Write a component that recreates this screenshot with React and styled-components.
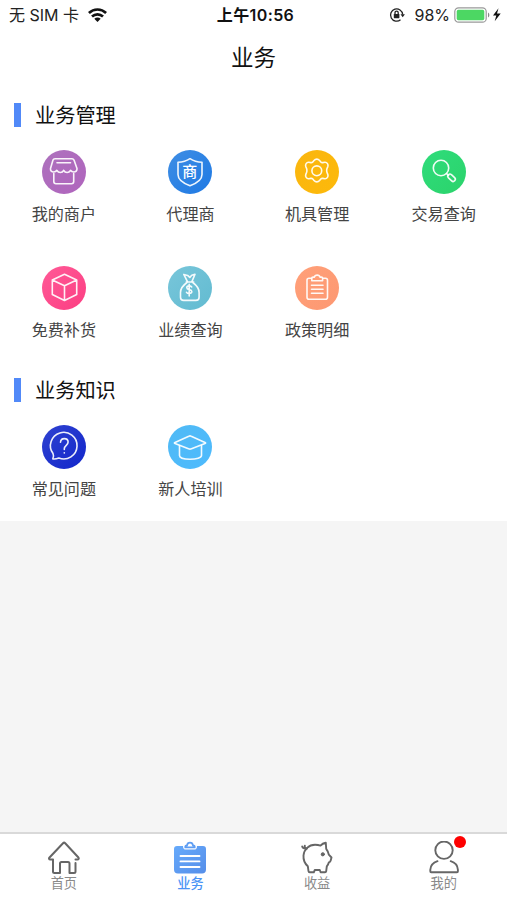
import React from "react";
import styled, { createGlobalStyle } from "styled-components";

const GlobalStyle = createGlobalStyle`
    * {
        box-sizing: border-box;
    }

    body {
        margin: 0;
        background: #f5f5f5;
        font-family: "Inter", "Noto Sans CJK SC", sans-serif;
    }
`;

const Page = styled.div`
    display: flex;
    flex-direction: column;
    height: 100vh;
    overflow: hidden;
`;

const Content = styled.main`
    height: 521px;
    background: #fff;
`;

const StatusBar = styled.div`
    display: grid;
    grid-template-columns: 1fr auto 1fr;
    align-items: center;
    height: 30px;
    padding: 0 5px 0 9px;
    color: #222;
    font-size: 16px;
    line-height: 30px;
    white-space: nowrap;
`;

const Carrier = styled.div`
    display: flex;
    align-items: center;
    gap: 9px;
`;

const Time = styled.div`
    color: #111;
    font-weight: 600;
    font-size: 16px;
    letter-spacing: 0.4px;
`;

const Power = styled.div`
    display: flex;
    align-items: center;
    justify-content: flex-end;
`;

const Percent = styled.span`
    margin: 0 4px 0 9px;
`;

const NavBar = styled.h1`
    margin: 0;
    height: 54px;
    color: #111;
    font-size: 22.5px;
    font-weight: 400;
    line-height: 56px;
    text-align: center;
`;

const Section = styled.section`
    padding-top: ${(props) => props.$top}px;
`;

const SectionTitle = styled.h2`
    display: flex;
    align-items: center;
    gap: 14px;
    height: 24px;
    margin: 0 0 23px 14px;
    color: #111;
    font-size: 20.2px;
    font-weight: 400;

    &::before {
        content: "";
        width: 7px;
        height: 24px;
        background: #5189f8;
    }

    span {
        padding-top: 2px;
        line-height: 24px;
    }
`;

const Grid = styled.div`
    display: grid;
    grid-template-columns: repeat(4, 1fr);
    row-gap: 36px;
    padding-left: 0.5px;
`;

const Item = styled.div`
    display: flex;
    flex-direction: column;
    align-items: center;
    height: 80px;
`;

const Circle = styled.div`
    width: 44px;
    height: 44px;
    border-radius: 50%;
    background: linear-gradient(135deg, ${(props) => props.$from}, ${(props) => props.$to});

    svg {
        display: block;
    }
`;

const Label = styled.div`
    margin-top: 8px;
    color: #444;
    font-size: 16.1px;
    line-height: 24px;
`;

const TabBar = styled.nav`
    display: grid;
    grid-template-columns: repeat(4, 1fr);
    height: 68px;
    margin-top: auto;
    padding-left: 0.5px;
    border-top: 2px solid #d9d9d9;
    background: #fff;
`;

const Tab = styled.div`
    display: flex;
    flex-direction: column;
    align-items: center;
    padding-top: 7px;
    color: ${(props) => (props.$active ? "#4a94f5" : "#8a8a8a")};
    font-size: 13.2px;
    font-weight: ${(props) => (props.$active ? 500 : 400)};
    line-height: 18px;
`;

const TabIcon = styled.div`
    position: relative;
    height: 33px;

    svg {
        display: block;
    }
`;

const Dot = styled.span`
    position: absolute;
    top: -5px;
    right: -6px;
    width: 12px;
    height: 12px;
    border-radius: 50%;
    background: #fe0000;
`;

const Icon = ({ children }) => (
    <svg
        width="44"
        height="44"
        viewBox="0 0 44 44"
        fill="none"
        stroke="#fff"
        strokeOpacity="0.92"
        strokeWidth="1.6"
        strokeLinecap="round"
        strokeLinejoin="round"
    >
        {children}
    </svg>
);

const ShopIcon = () => (
    <Icon>
        <path d="M13 8.700h17c1 0 1.600.5 2 1.400l3 8.400c.2 2.200-1.300 3.500-3.200 3.500-1.600 0-2.600-.6-3.300-1.700-.7 1.200-1.800 2.200-3.400 2.200s-2.800-1-3.400-2.200c-.6 1.200-1.800 2.200-3.400 2.200s-2.700-1-3.400-2.200c-.7 1.100-1.700 1.700-3.200 1.700-2 0-3.500-1.300-3.200-3.500l2.500-8.400c.3-.9 1-1.400 2-1.400z" />
        <path d="M15 12.700h13.500" />
        <path d="M11.800 23.500v8c0 1.400.8 2.200 2.200 2.200h15.500c1.400 0 2.200-.8 2.200-2.200v-8" />
    </Icon>
);

const AgentIcon = () => (
    <Icon>
        <path d="M22 8.700c3.500 2.400 7.500 3.500 12 3.500v12.300c0 5-4.500 8.500-12 11.300-7.500-2.800-12-6.300-12-11.300V12.200c4.500 0 8.500-1.100 12-3.500z" />
        <text
            x="21.700"
            y="27.300"
            fill="#fff"
            stroke="none"
            fontSize="15"
            fontWeight="500"
            textAnchor="middle"
            fontFamily="Noto Sans CJK SC, sans-serif"
        >
            商
        </text>
    </Icon>
);

const GearIcon = () => (
    <Icon>
        <path d="M19 10.500c1.600-1.800 4-1.800 5.600 0l1.200 1.400c.5.600 1.200.8 2 .7l2-.3c2.300-.2 3.800 2.200 3 4.300l-.8 1.900c-.3.700-.3 1.300-.3 2s0 1.300.3 2l.8 1.900c.8 2.100-.7 4.500-3 4.300l-2-.3c-.8-.1-1.500.1-2 .7l-1.200 1.400c-1.600 1.800-4 1.800-5.600 0l-1.200-1.400c-.5-.6-1.200-.8-2-.7l-2 .3c-2.300.2-3.800-2.200-3-4.300l.8-1.900c.3-.7.3-1.300.3-2s0-1.300-.3-2l-.8-1.900c-.8-2.100.7-4.500 3-4.300l2 .3c.8.1 1.500-.1 2-.7z" />
        <circle cx="21.800" cy="20.800" r="4.900" />
    </Icon>
);

const SearchIcon = () => (
    <Icon>
        <circle cx="19" cy="18" r="7.700" />
        <path d="M24.500 23.500l2 2" />
        <rect x="25.200" y="25.600" width="8.600" height="4.300" rx="2.100" transform="rotate(43 29.500 27.800)" />
    </Icon>
);

const BoxIcon = () => (
    <Icon>
        <path d="M22.500 8.300l12.200 5.700v14.500l-12.200 6-12.200-6V14zM10.300 14l12.200 5.800L34.700 14M22.500 19.800v14.700" />
    </Icon>
);

const MoneyIcon = () => (
    <Icon>
        <path d="M19.300 15.400l-3.500-7 3.800 1 2.200 2 2-2.200 3.200-1-3 7.200" />
        <path d="M18.300 16h7.400M19 16.500c-4.200 3-6.500 5.500-6.500 10v4.700c0 2.200 1 3.200 3.200 3.200h12.200c2.200 0 3.200-1 3.200-3.200v-4.700c0-4.500-2.300-7-6.300-10" />
        <path d="M23.700 20.900c-.6-.7-1.400-1-2.600-1-1.400 0-2.300.7-2.300 1.800 0 2.600 5 1.200 5 3.900 0 1.200-1 1.900-2.600 1.900-1.200 0-2.200-.4-2.700-1.200M21.200 18.300v11.700" />
    </Icon>
);

const PolicyIcon = () => (
    <Icon>
        <path d="M16.500 12.300H14c-1.200 0-2 .8-2 2v17c0 1.200.8 2 2 2h16.500c1.200 0 2-.8 2-2v-17c0-1.200-.8-2-2-2H28" />
        <path d="M16.800 14.800v-2.500c0-.8.500-1.200 1.200-1.200h1.400c.3-1.300 1.200-2 2.800-2s2.500.7 2.800 2h1.400c.7 0 1.200.4 1.200 1.200v2.500z" />
        <path d="M16.500 19.300h11.500M16.500 23.300h11.500M16.500 27.300h11.500" />
    </Icon>
);

const QuestionIcon = () => (
    <Icon>
        <path d="M11 28.500A13.300 13.300 0 1 1 16.800 33c-2 .8-4 1.200-6 .9 1-1.700 1-3.600.2-5.400z" />
        <path d="M18.500 17.200c.2-2.200 1.600-3.600 3.800-3.600s3.800 1.400 3.800 3.500c0 3.200-3.800 3.200-3.800 6.700v.7M22.300 27.800v.2" />
    </Icon>
);

const TrainingIcon = () => (
    <Icon>
        <path d="M20.800 11.200c.8-.4 1.600-.4 2.400 0L37 17.400c.8.400.8.900 0 1.200l-13.500 5.200c-1 .4-2 .4-3 0L7 18.600c-.8-.3-.8-.8 0-1.200z" />
        <path d="M11.500 20.600v10c0 2 4 3.700 10.500 3.700s11.500-1.700 11.500-3.700v-10" />
    </Icon>
);

const HomeIcon = () => (
    <svg width="32" height="34" viewBox="0 0 32 34" fill="none" stroke="#666" strokeWidth="2" strokeLinecap="round" strokeLinejoin="round">
        <path d="M27.500 22v8.500c0 1-.6 1.500-1.500 1.500h-4.500V22.500c0-1-.6-1.500-1.500-1.500h-6.500c-1 0-1.500.5-1.500 1.500V32H6.500c-1 0-1.500-.5-1.500-1.500V18.500H2.300c-1.300 0-1.700-1-.8-2L15 2.200c.7-.7 1.500-.7 2.200 0l13 14c1 1.200.5 2.300-.9 2.300h-1.800" />
    </svg>
);

const BusinessIcon = () => (
    <svg width="34" height="34" viewBox="0 0 34 34" fill="none">
        <defs>
            <linearGradient id="clip" x1="1" y1="1" x2="0" y2="0">
                <stop offset="0" stopColor="#568ee9" />
                <stop offset="1" stopColor="#66aafb" />
            </linearGradient>
        </defs>
        <path d="M4 5h6c0 2.600 1 3.600 3 3.600h8c2 0 3-1 3-3.600h6c2 0 3 1 3 3v20.500c0 2.600-1.400 4-4 4H5c-2.600 0-4-1.400-4-4V8c0-2 1-3 3-3z" fill="url(#clip)" />
        <path d="M12.300 6.400c-.2-1.500.5-2.100 1.700-2.100.3-1.700 1.300-2.700 3-2.700s2.700 1 3 2.700c1.200 0 1.900.6 1.700 2.100z" stroke="#5e9df3" strokeWidth="1.800" />
        <path d="M7.500 15h19M7.500 20.400h19M7.500 26h19" stroke="#fff" strokeWidth="1.900" strokeLinecap="round" />
    </svg>
);

const PigIcon = () => (
    <svg width="32" height="34" viewBox="0 0 32 34" fill="none" stroke="#666" strokeWidth="1.900" strokeLinecap="round" strokeLinejoin="round">
        <path d="M19.500 4.600c-1.500-.6-3.500-.9-5.500-.9C7.700 3.700 3 8.500 2.500 14.500c-.3 4.300 1.300 8 4.300 10.700l.7 5c.1.800.5 1.100 1.200 1.100h4.100l1-2.300h5l.8 2.300H24c.7 0 1.100-.4 1.200-1.100l.6-4.800c.9-1.200 1.600-2.400 2-4 .9-.2 1.500-.7 1.800-1.700l.9-3.200-2.700-2.800c-.4-2.300-1.300-4.300-2.600-5.900l-.4-6c-2.100.4-3.900 1.300-5.300 2.800z" />
        <path d="M1.200 5.500c.5 1.700 1.800 2.300 4.300 2M3.800 4.600c-.3 1.500.2 2.700 2.200 3" />
        <circle cx="21.800" cy="13.300" r="1.600" fill="#666" strokeWidth="1" />
    </svg>
);

const UserIcon = () => (
    <svg width="32" height="34" viewBox="0 0 32 34" fill="none" stroke="#666" strokeWidth="1.900" strokeLinecap="round" strokeLinejoin="round">
        <circle cx="16" cy="9.200" r="8.700" />
        <path d="M9.500 20.200c-4.500 1.500-7 5-7.200 8.500v1.600c0 .6.300.9.900.9h25.800c.6 0 .9-.3.900-.9v-1.600c-.3-4-2.800-7.200-7.200-8.500" />
    </svg>
);

const WifiIcon = () => (
    <svg width="19" height="14" viewBox="0 0 19 14" fill="none" stroke="#111" strokeWidth="2.700">
        <path d="M.9 5c4.900-4.700 12.300-4.700 17.200 0M4 8.500c3.200-2.900 7.800-2.900 11 0" />
        <path d="M6.300 10.800c1.800-1.600 4.600-1.600 6.400 0l-3.200 3.100z" fill="#111" stroke="none" />
    </svg>
);

const LockIcon = () => (
    <svg width="16" height="16" viewBox="0 0 16 16" fill="none" stroke="#222" strokeWidth="1.300">
        <path d="M11.500 12.800A6.100 6.100 0 1 1 13.700 7.500" />
        <path d="M11.500 7.300h4.400l-2.200 3z" fill="#222" stroke="none" />
        <rect x="4.800" y="7" width="5.600" height="4.200" rx=".6" fill="#222" stroke="none" />
        <path d="M6 7.200V5.800c0-2.200 3.200-2.200 3.200 0v1.400" />
    </svg>
);

const BatteryIcon = () => (
    <svg width="48" height="16" viewBox="0 0 48 16">
        <rect x=".8" y=".8" width="31.400" height="14.400" rx="3.800" fill="#fff" stroke="#999" strokeWidth="1.200" />
        <rect x="2.700" y="2.700" width="27.600" height="10.600" rx="1.700" fill="#4cd763" />
        <path d="M34 5.500c1.800.8 1.800 4.200 0 5z" fill="#888" />
        <path d="M44.500 1.300l-5.500 7.300h3.300l-1.600 5.700 6-7.700h-3.700z" fill="#111" />
    </svg>
);

const management = [
    { label: "我的商户", icon: ShopIcon, from: "#ad72bd", to: "#b064bd" },
    { label: "代理商", icon: AgentIcon, from: "#3f8ee4", to: "#1e79e4" },
    { label: "机具管理", icon: GearIcon, from: "#fab60f", to: "#fdb90a" },
    { label: "交易查询", icon: SearchIcon, from: "#2fdc7b", to: "#2bd36b" },
    { label: "免费补货", icon: BoxIcon, from: "#ff5a97", to: "#fc3e82" },
    { label: "业绩查询", icon: MoneyIcon, from: "#78c6da", to: "#62bbd1" },
    { label: "政策明细", icon: PolicyIcon, from: "#ffa079", to: "#fd9872" },
];

const knowledge = [
    { label: "常见问题", icon: QuestionIcon, from: "#2f42d0", to: "#1226cb" },
    { label: "新人培训", icon: TrainingIcon, from: "#50baf5", to: "#4dbafd" },
];

const tabs = [
    { label: "首页", icon: HomeIcon },
    { label: "业务", icon: BusinessIcon, active: true },
    { label: "收益", icon: PigIcon },
    { label: "我的", icon: UserIcon, dot: true },
];

const Menu = ({ title, items, top }) => (
    <Section $top={top}>
        <SectionTitle>
            <span>{title}</span>
        </SectionTitle>
        <Grid>
            {items.map((item) => (
                <Item key={item.label}>
                    <Circle $from={item.from} $to={item.to}>
                        <item.icon />
                    </Circle>
                    <Label>{item.label}</Label>
                </Item>
            ))}
        </Grid>
    </Section>
);

export default () => {
    return (
        <Page>
            <GlobalStyle />
            <Content>
                <StatusBar>
                    <Carrier>
                        <span>无 SIM 卡</span>
                        <WifiIcon />
                    </Carrier>
                    <Time>上午10:56</Time>
                    <Power>
                        <LockIcon />
                        <Percent>98%</Percent>
                        <BatteryIcon />
                    </Power>
                </StatusBar>
                <NavBar>业务</NavBar>
                <Menu title="业务管理" items={management} top={19} />
                <Menu title="业务知识" items={knowledge} top={32} />
            </Content>
            <TabBar>
                {tabs.map((tab) => (
                    <Tab key={tab.label} $active={tab.active}>
                        <TabIcon>
                            <tab.icon />
                            {tab.dot && <Dot />}
                        </TabIcon>
                        {tab.label}
                    </Tab>
                ))}
            </TabBar>
        </Page>
    )
}
